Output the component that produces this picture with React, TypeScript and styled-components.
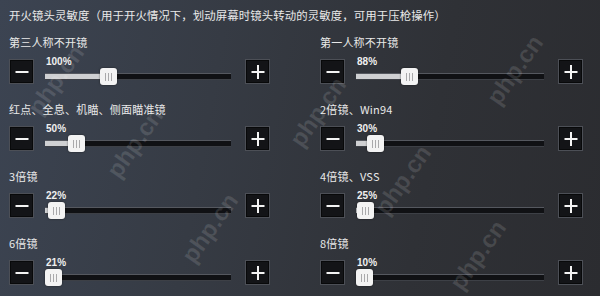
import React from "react";
import styled, { createGlobalStyle } from "styled-components";

type Setting = {
  label: string;
  value: number;
  offset: number; // thumb offset on the track, px
};

const settings: Setting[] = [
  { label: "第三人称不开镜", value: 100, offset: 55 },
  { label: "第一人称不开镜", value: 88, offset: 45 },
  { label: "红点、全息、机瞄、侧面瞄准镜", value: 50, offset: 23 },
  { label: "2倍镜、Win94", value: 30, offset: 11 },
  { label: "3倍镜", value: 22, offset: 3 },
  { label: "4倍镜、VSS", value: 25, offset: 1 },
  { label: "6倍镜", value: 21, offset: 0 },
  { label: "8倍镜", value: 10, offset: 0 }
];

// watermark spots, kept away from the edges
const marks = [
  { x: 56, y: 80 },
  { x: 515, y: 70 },
  { x: 135, y: 143 },
  { x: 318, y: 112 },
  { x: 403, y: 180 },
  { x: 210, y: 228 },
  { x: 478, y: 255 }
];

const GlobalStyle = createGlobalStyle`
  html, body {
    margin: 0;
    padding: 0;
    background: #2f3238;
  }
  * {
    box-sizing: border-box;
  }
`;

const Page = styled.div`
  position: relative;
  width: 600px;
  height: 296px;
  overflow: hidden;
  padding: 8px 17px 0 9px;
  font-family: "Noto Sans CJK SC", "Noto Sans", sans-serif;
  color: #e9e9e9;
  background: linear-gradient(100deg, #3c4452 0%, #363b44 35%, #2f3136 70%, #2b2c30 100%);
`;

const Title = styled.div`
  font-size: 11.4px;
  line-height: 14px;
  white-space: nowrap;
  letter-spacing: 0.1px;
`;

const Grid = styled.div`
  display: grid;
  grid-template-columns: 261px 263px;
  column-gap: 50px;
  row-gap: 17px;
  margin-top: 13px;
`;

const Block = styled.div`
  display: flex;
  flex-direction: column;
`;

const Label = styled.div`
  font-size: 11px;
  line-height: 14px;
  margin-bottom: 10px;
  white-space: nowrap;
  letter-spacing: 0.2px;
`;

const Controls = styled.div`
  display: flex;
  align-items: flex-start;
  height: 26px;
`;

const StepButton = styled.div`
  position: relative;
  flex: 0 0 25px;
  width: 25px;
  height: 25px;
  background: #131417;
  border: 1px solid #4c4f56;
  box-shadow: inset 0 0 0 1px #08090a;
`;

const Bar = styled.span<{ $vertical?: boolean }>`
  position: absolute;
  left: 50%;
  top: 50%;
  width: ${(p) => (p.$vertical ? "2px" : "13px")};
  height: ${(p) => (p.$vertical ? "14px" : "2px")};
  background: #f4f4f4;
  transform: translate(-50%, -50%);
`;

const Slider = styled.div`
  flex: 1;
  margin: 0 14px 0 11px;
  display: flex;
  flex-direction: column;
`;

const Percent = styled.div`
  font-family: "Liberation Sans", Arial, sans-serif;
  font-weight: bold;
  font-size: 10px;
  line-height: 12px;
  margin: -3px 0 0 1px;
  color: #f0f0f0;
`;

const TrackWrap = styled.div`
  position: relative;
  height: 17px;
`;

const Track = styled.div`
  position: absolute;
  left: 0;
  right: 0;
  top: 5px;
  height: 7px;
  background: #101114;
  border-top: 1px solid #55585f;
  border-bottom: 1px solid #3d4046;
`;

const Fill = styled.div`
  position: absolute;
  left: 0;
  top: 6px;
  height: 5px;
  background: #cfd0d2;
`;

const Thumb = styled.div`
  position: absolute;
  top: 0;
  width: 17px;
  height: 17px;
  border-radius: 3px;
  background: #f3f3f3;
  box-shadow: 0 0 2px rgba(0, 0, 0, 0.6);
  display: flex;
  align-items: center;
  justify-content: center;
  gap: 2px;

  & > span {
    width: 1px;
    height: 8px;
    background: #a9a9ab;
  }
`;

const Mark = styled.div`
  position: absolute;
  font-family: "Liberation Sans", Arial, sans-serif;
  font-weight: bold;
  font-size: 24px;
  color: rgba(255, 255, 255, 0.12);
  transform: translate(-50%, -50%) rotate(-55deg);
  white-space: nowrap;
  pointer-events: none;
`;

const SettingItem: React.FC<{ setting: Setting }> = ({ setting }) => (
  <Block>
    <Label>{setting.label}</Label>
    <Controls>
      <StepButton>
        <Bar />
      </StepButton>
      <Slider>
        <Percent>{setting.value}%</Percent>
        <TrackWrap>
          <Track />
          <Fill style={{ width: `${setting.offset + 8}px` }} />
          <Thumb style={{ left: `${setting.offset}px` }}>
            <span />
            <span />
            <span />
          </Thumb>
        </TrackWrap>
      </Slider>
      <StepButton>
        <Bar />
        <Bar $vertical />
      </StepButton>
    </Controls>
  </Block>
);

export default function App() {
  return (
    <>
      <GlobalStyle />
      <Page>
        <Title>
          开火镜头灵敏度（用于开火情况下，划动屏幕时镜头转动的灵敏度，可用于压枪操作）
        </Title>
        <Grid>
          {settings.map((s) => (
            <SettingItem key={s.label} setting={s} />
          ))}
        </Grid>
        {marks.map((m, i) => (
          <Mark key={i} style={{ left: m.x, top: m.y }}>
            php.cn
          </Mark>
        ))}
      </Page>
    </>
  );
}
